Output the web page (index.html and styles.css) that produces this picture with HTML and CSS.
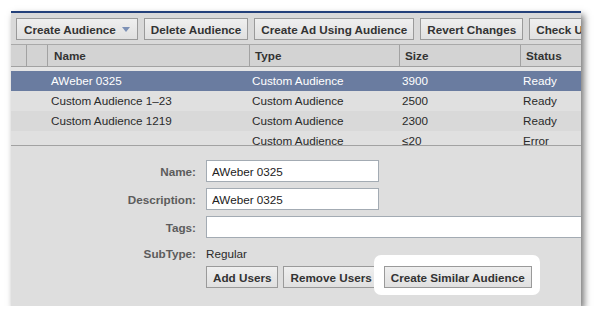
FILE: index.html
```html
<!DOCTYPE html>
<html lang="en">
<head>
    <meta charset="UTF-8">
    <title>Audiences</title>
    <link rel="stylesheet" href="styles.css">
</head>
<body>
    <div class="panel">
        <div class="toolbar">
            <button class="btn">Create Audience <span class="caret"></span></button>
            <button class="btn">Delete Audience</button>
            <button class="btn">Create Ad Using Audience</button>
            <button class="btn">Revert Changes</button>
            <button class="btn">Check Users</button>
        </div>

        <div class="grid">
            <div class="grid-head">
                <div class="cell"></div>
                <div class="cell"></div>
                <div class="cell name">Name</div>
                <div class="cell">Type</div>
                <div class="cell">Size</div>
                <div class="cell">Status</div>
            </div>
            <div class="grid-body">
                <div class="row selected">
                    <div class="cell"></div><div class="cell"></div>
                    <div class="cell name">AWeber 0325</div>
                    <div class="cell">Custom Audience</div>
                    <div class="cell">3900</div>
                    <div class="cell">Ready</div>
                </div>
                <div class="row">
                    <div class="cell"></div><div class="cell"></div>
                    <div class="cell name">Custom Audience 1–23</div>
                    <div class="cell">Custom Audience</div>
                    <div class="cell">2500</div>
                    <div class="cell">Ready</div>
                </div>
                <div class="row alt">
                    <div class="cell"></div><div class="cell"></div>
                    <div class="cell name">Custom Audience 1219</div>
                    <div class="cell">Custom Audience</div>
                    <div class="cell">2300</div>
                    <div class="cell">Ready</div>
                </div>
                <div class="row">
                    <div class="cell"></div><div class="cell"></div>
                    <div class="cell name"></div>
                    <div class="cell">Custom Audience</div>
                    <div class="cell">≤20</div>
                    <div class="cell">Error</div>
                </div>
            </div>
        </div>

        <div class="details">
            <div class="field">
                <label>Name:</label>
                <input class="text" type="text" value="AWeber 0325">
            </div>
            <div class="field">
                <label>Description:</label>
                <input class="text" type="text" value="AWeber 0325">
            </div>
            <div class="field">
                <label>Tags:</label>
                <input class="text wide" type="text" value="">
            </div>
            <div class="field subtype">
                <label>SubType:</label>
                <span>Regular</span>
            </div>
            <div class="actions">
                <button class="btn">Add Users</button>
                <button class="btn">Remove Users</button>
                <span class="highlight"><button class="btn">Create Similar Audience</button></span>
            </div>
        </div>
    </div>
</body>
</html>
```

FILE: styles.css
```css
body {
    margin: 0;
    padding: 11px 0 0 11px;
    background: #fff;
    font-family: "Liberation Sans", Arial, sans-serif;
    font-size: 11.7px;
    color: #2a2a2a;
}
.panel {
    width: 570px;
    height: 295px;
    box-sizing: border-box;
    background: #dedede;
    border-top: 2px solid #23407a;
    box-shadow: 3px 4px 7px rgba(0,0,0,0.55);
    overflow: hidden;
}
.btn {
    flex-shrink: 0;
    height: 22px;
    padding: 0 6px;
    border: 1px solid #9a9a9a;
    background: linear-gradient(#efefef, #e0e0e0);
    font-family: inherit;
    font-size: 11.7px;
    font-weight: bold;
    color: #333;
    white-space: nowrap;
    display: inline-flex;
    align-items: center;
}
.toolbar {
    display: flex;
    gap: 6px;
    height: 32px;
    padding: 5px 5px 0;
    box-sizing: border-box;
    background: #d9d9d9;
    border-bottom: 1px solid #a9a9a9;
}
.toolbar .btn:first-child {
    padding-left: 7px;
}
.caret {
    display: inline-block;
    margin-left: 6px;
    margin-right: 1px;
    border-left: 4px solid transparent;
    border-right: 4px solid transparent;
    border-top: 5px solid #7d91b6;
}
.grid-head,
.row {
    display: grid;
    grid-template-columns: 16px 21px 202px 150px 121px 1fr;
}
.grid-head {
    height: 22px;
    box-sizing: border-box;
    background: #d3d3d3;
    border-bottom: 1px solid #a2a2a2;
}
.grid-head .cell {
    border-right: 1px solid #a2a2a2;
    padding-left: 5px;
    font-weight: bold;
    line-height: 21px;
    color: #333;
}
.grid-head .cell.name {
    padding-left: 6px;
}
.grid-head .cell:last-child {
    border-right: none;
}
.grid-body {
    height: 78px;
    padding-top: 4px;
    box-sizing: border-box;
    background: #e4e4e4;
    overflow: hidden;
}
.row {
    height: 20px;
    line-height: 20px;
    background: #e0e0e0;
}
.row .cell {
    padding-left: 2px;
    white-space: nowrap;
}
.row .cell.name {
    padding-left: 3px;
}
.row.alt {
    background: #d9d9d9;
}
.row.selected {
    background: #6a7ca0;
    color: #fff;
}
.details {
    border-top: 1px solid #a2a2a2;
    padding-top: 14px;
}
.field {
    display: flex;
    align-items: center;
    gap: 10px;
    height: 22px;
    margin-bottom: 6px;
}
.field label {
    width: 185px;
    flex-shrink: 0;
    text-align: right;
    font-weight: bold;
    color: #5c5c5c;
}
.text {
    width: 173px;
    height: 22px;
    box-sizing: border-box;
    padding: 0 5px;
    border: 1px solid #a3abb3;
    background: #fff;
    font-family: inherit;
    font-size: 11.7px;
    color: #222;
    flex-shrink: 0;
}
.text.wide {
    width: 400px;
}
.field.subtype {
    height: 18px;
    margin-bottom: 4px;
}
.actions {
    display: flex;
    gap: 5px;
    padding-left: 195px;
}
.highlight {
    position: relative;
    z-index: 0;
}
.highlight::before {
    content: "";
    position: absolute;
    top: -11px;
    right: -8px;
    bottom: -7px;
    left: -10px;
    background: #fff;
    border-radius: 7px;
    z-index: -1;
}
```
